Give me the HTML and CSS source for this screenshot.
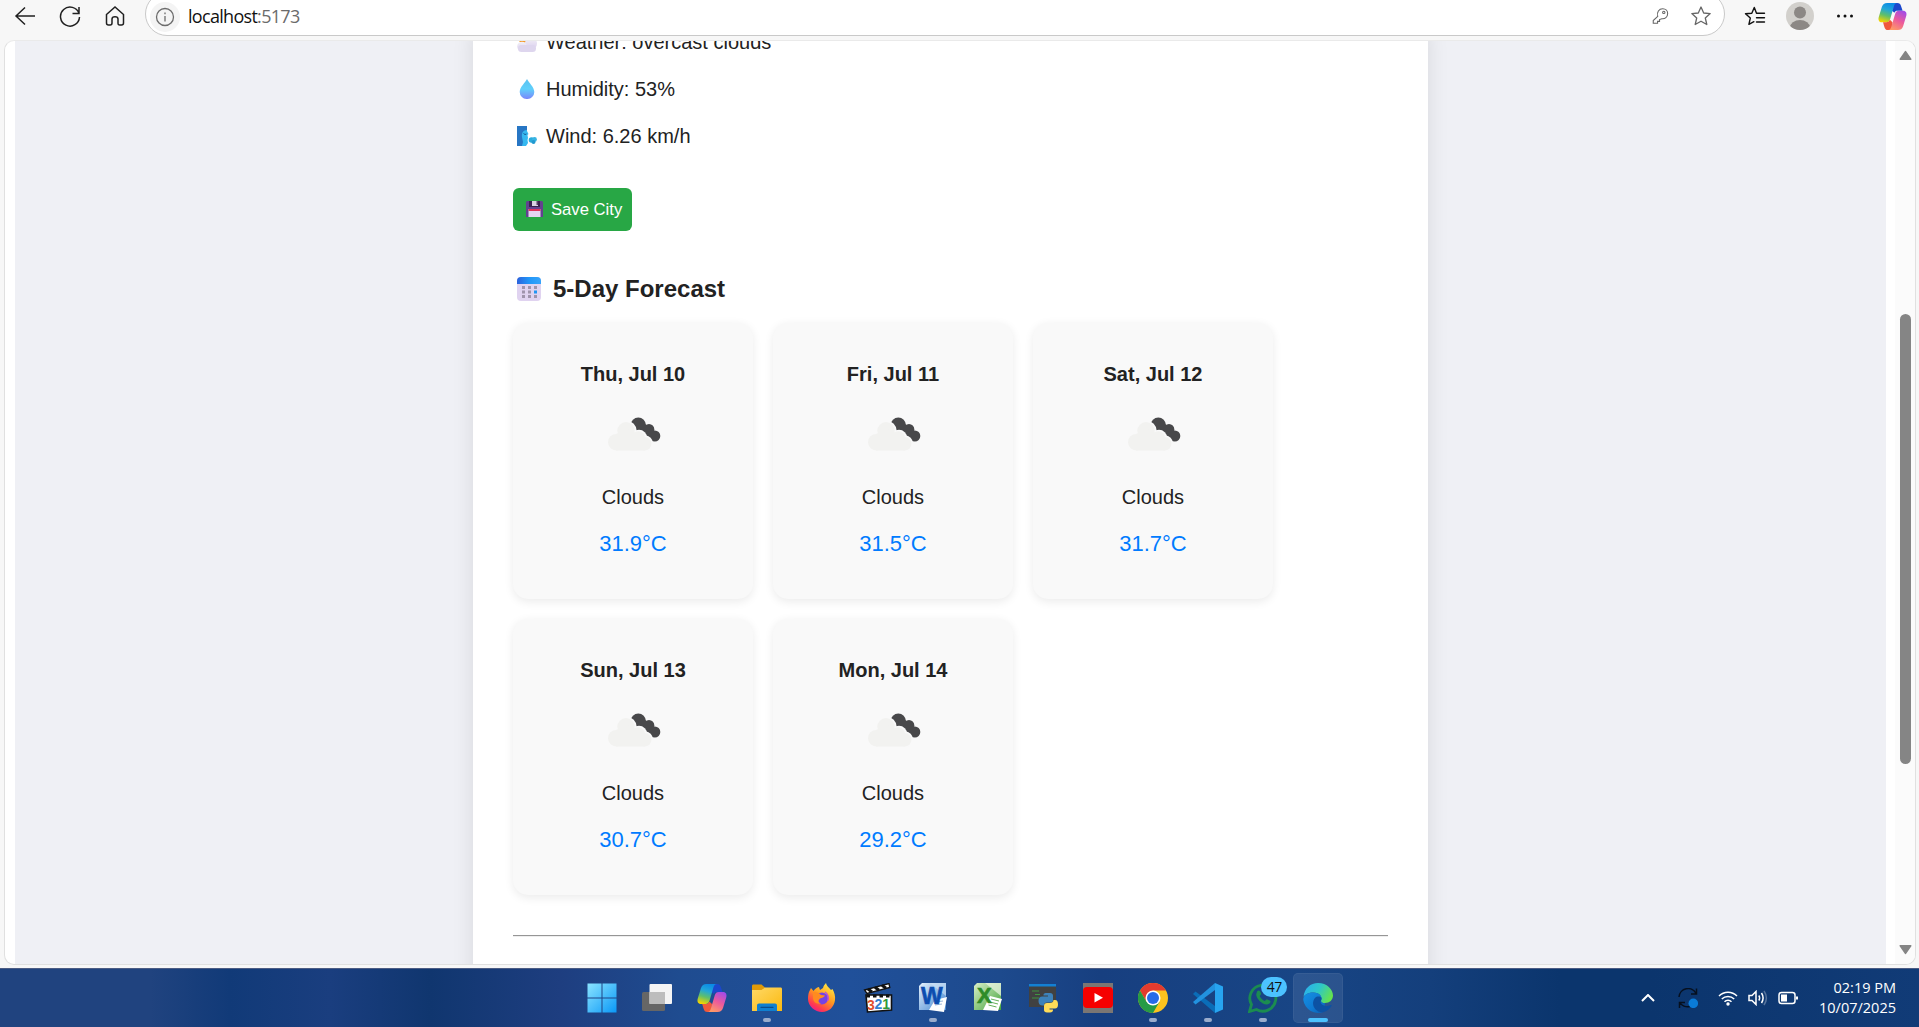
FILE: index.html
```html
<!DOCTYPE html>
<html lang="en">
<head>
<meta charset="utf-8">
<title>Weather forecast</title>
<link rel="stylesheet" href="styles.css">
</head>
<body>
<svg width="0" height="0" class="defs" aria-hidden="true">
  <defs>
    <linearGradient id="cpA" x1="0.6" y1="0" x2="0.3" y2="1"><stop offset="0" stop-color="#0a8ae6"/><stop offset=".35" stop-color="#22a7d8"/><stop offset=".65" stop-color="#5fbf6b"/><stop offset="1" stop-color="#f4d400"/></linearGradient>
    <linearGradient id="cpB" x1="0.8" y1="0" x2="0.3" y2="1"><stop offset="0" stop-color="#a14be8"/><stop offset=".5" stop-color="#ec5a9c"/><stop offset="1" stop-color="#ff9a66"/></linearGradient>
    <linearGradient id="win" x1="0" y1="0" x2="1" y2="1"><stop offset="0" stop-color="#8be4ff"/><stop offset="1" stop-color="#0a98f7"/></linearGradient>
    <linearGradient id="fold" x1="0" y1="0" x2="1" y2="1"><stop offset="0" stop-color="#ffd967"/><stop offset="1" stop-color="#fbb90f"/></linearGradient>
    <linearGradient id="ff" x1="0.8" y1="0" x2="0.2" y2="1"><stop offset="0" stop-color="#fff04a"/><stop offset=".45" stop-color="#ff9a1f"/><stop offset=".8" stop-color="#ff3a4f"/><stop offset="1" stop-color="#e8149c"/></linearGradient>
    <linearGradient id="edgeTop" x1="0" y1="0.2" x2="1" y2="0.6"><stop offset="0" stop-color="#2aaef0"/><stop offset=".5" stop-color="#2fc7c6"/><stop offset="1" stop-color="#66e34a"/></linearGradient>
    <linearGradient id="edgeBot" x1="0" y1="0" x2="1" y2="1"><stop offset="0" stop-color="#1590e4"/><stop offset=".6" stop-color="#0f78d0"/><stop offset="1" stop-color="#0b5cb0"/></linearGradient>
    <linearGradient id="drop" x1="0" y1="0" x2="0" y2="1"><stop offset="0" stop-color="#5cc2f0"/><stop offset=".5" stop-color="#5fd0fb"/><stop offset="1" stop-color="#7a86fb"/></linearGradient>
    <linearGradient id="calTop" x1="0" y1="0" x2="1" y2="0"><stop offset="0" stop-color="#2b62dc"/><stop offset=".5" stop-color="#2196f8"/><stop offset="1" stop-color="#37a4fb"/></linearGradient>
    <linearGradient id="puff" x1="0" y1="0" x2="0" y2="1"><stop offset="0" stop-color="#f3f1f6"/><stop offset="1" stop-color="#d9cdee"/></linearGradient>
    <linearGradient id="excel" x1="0" y1="0" x2="1" y2="1"><stop offset="0" stop-color="#d9f0c8"/><stop offset="1" stop-color="#45a33c"/></linearGradient>
    <linearGradient id="word" x1="0" y1="0" x2="1" y2="1"><stop offset="0" stop-color="#e6f2fd"/><stop offset="1" stop-color="#3f83cf"/></linearGradient>
    <symbol id="copilot" viewBox="0 0 30 28">
      <path d="M15 0h5c2.300 0 3.200 1 4 3.500L25.500 8H20c-1.500 0-2.300.5-3 2L14.500 8z" fill="#1b47cc"/>
      <path d="M9.500 0H20c-2.200 0-3 1.600-3.600 3.600L12.600 16.500C11.800 19 10.800 20 8.500 20H4C1 20 0 17.500.7 14.700L4 4C5 1.300 6.500 0 9.500 0z" fill="url(#cpA)"/>
      <path d="M14.500 28H10.500c-2.500 0-3.200-1-4-3.500L5.200 20h3.300c1.900 0 3-.8 3.800-2.600L15 20z" fill="#f0583c"/>
      <path d="M20.500 28H10.500c2 0 2.800-1.600 3.400-3.600L17.700 11.500C18.500 9 19.500 8 21.800 8H26c3 0 4 2.500 3.300 5.300L26 24c-1 2.700-2.500 4-5.500 4z" fill="url(#cpB)"/>
    </symbol>
    <symbol id="clouds" viewBox="0 0 62 62">
      <g fill="#48484a"><circle cx="36.300" cy="23" r="7.600"/><circle cx="47" cy="27.300" r="5.300"/><circle cx="52.800" cy="34" r="5.500"/><path d="M38 20l9 4 8 7-6 8-14-10z"/></g>
      <g fill="#f9f9f9"><circle cx="24.500" cy="29" r="10.200"/><circle cx="37" cy="36" r="8.200"/><circle cx="43" cy="41.500" r="8"/></g>
      <g fill="#f2f2f0"><circle cx="14.300" cy="40.200" r="8.300"/><circle cx="24" cy="28.800" r="8.700"/><circle cx="36.300" cy="36" r="6.800"/><circle cx="42.800" cy="41.800" r="6.700"/><path d="M14 32l10-5 13 5 6 16.500H14z"/></g>
    </symbol>
  </defs>
</svg>

<div class="screen">
  <header class="toolbar">
    <svg class="nav" viewBox="0 0 24 24"><path d="M22 12H3M12 3.500L3 12l9 8.500"/></svg>
    <svg class="nav" viewBox="0 0 24 24"><path d="M21 9.500A9.500 9.500 0 1 0 21.500 13M21 3v6.500h-6.500"/></svg>
    <svg class="nav" viewBox="0 0 24 24"><path d="M3.500 10.500L12 3l8.500 7.500V19c0 1.400-.7 2-2 2h-1.700c-1.300 0-1.800-.6-1.800-2v-4c0-1.300-1-2.200-3-2.200S9 13.700 9 15v4c0 1.400-.5 2-1.800 2H5.500c-1.300 0-2-.6-2-2z"/></svg>
    <div class="address">
      <span class="info"><svg viewBox="0 0 20 20"><circle cx="10" cy="10" r="8.500"/><path d="M10 9v5.500M10 5.500v1.800"/></svg></span>
      <span class="url">localhost<span class="port">:5173</span></span>
      <svg class="key" viewBox="0 0 20 20"><path d="M7.500 10.500C6 5.500 9 2 13 2c3.500 0 5.500 2.500 5.500 5.200 0 4-3 6.300-6.500 5.800L9.500 14v2H7.300v2H2.500v-3z"/><circle cx="14.200" cy="6" r="1.300"/></svg>
      <svg class="star" viewBox="0 0 22 22"><path d="M11 2l2.700 6 6.500.6-4.900 4.400 1.500 6.500L11 16.200 5.200 19.500 6.700 13 1.800 8.600 8.300 8z"/></svg>
    </div>
    <svg class="fav" viewBox="0 0 22 22"><path d="M12.500 8.200L10.300 2.500 7.800 8.200l-6.300.6 4.800 4.300-1.400 6.200 5-2.600M12.500 8.200h8M12.500 12.800h8M12.500 17h8"/></svg>
    <svg class="avatar" viewBox="0 0 28 28"><clipPath id="av"><circle cx="14" cy="14" r="14"/></clipPath><g clip-path="url(#av)"><path fill="#d2d0cc" d="M0 0h28v28H0z"/><circle cx="14" cy="10.500" r="6" fill="#8c8885"/><ellipse cx="14" cy="25.500" rx="10" ry="7.500" fill="#8c8885"/></g></svg>
    <svg class="dots" viewBox="0 0 18 6"><circle cx="2.500" cy="3" r="1.500"/><circle cx="9" cy="3" r="1.500"/><circle cx="15.500" cy="3" r="1.500"/></svg>
    <svg class="pilot"><use href="#copilot"/></svg>
  </header>

  <main class="viewport">
    <div class="page">
      <section class="container">
        <p class="stat"><svg viewBox="0 0 20 20"><circle cx="6" cy="6" r="5" fill="#f39a2b"/><circle cx="14" cy="11.500" r="6" fill="url(#puff)"/><circle cx="5" cy="14.500" r="4.800" fill="url(#puff)"/><rect x="1" y="13" width="18" height="7" rx="3.500" fill="#ded6ee"/></svg><span>Weather: overcast clouds</span></p>
        <p class="stat"><svg viewBox="0 0 20 20"><path d="M10 0c1.500 3.500 7.300 8 7.300 13A7 7 0 0 1 10 20a7 7 0 0 1-7.300-7C2.700 8 8.500 3.500 10 0z" fill="url(#drop)"/></svg><span>Humidity: 53%</span></p>
        <p class="stat"><svg viewBox="0 0 20 20"><path d="M0 0h10v5l1.500 3-1 1 .5 3-.5 2 .5 3-2 3H0z" fill="#35b8f0"/><path d="M0 0h10v4C6 4 4.500 7 5 11l1 5-1 4H0z" fill="#2776c4"/><path d="M6.500 7.500q1.500 1.800 3 .5" stroke="#155a96" fill="none"/><circle cx="14.500" cy="14" r="2.800" fill="#2babdd"/><circle cx="17.500" cy="13.500" r="2.400" fill="#38b4e3"/><circle cx="16.500" cy="16" r="2" fill="#2299d0"/></svg><span>Wind: 6.26 km/h</span></p>
        <button class="save"><svg viewBox="0 0 17 17"><path d="M1 0h15l1 1v15H0V1z" fill="#63418f"/><path d="M3 0h11v6H3z" fill="#38224f"/><path d="M6 0h6v5H6z" fill="#d9d2e2"/><path d="M10.500 0h1.500v4h-1.500z" fill="#594269"/><path d="M2.500 8h12v8h-12z" fill="#e5d6f2"/><path d="M2.500 8h12v2h-12z" fill="#e0355c"/></svg><span>Save City</span></button>
        <h3 class="heading"><svg viewBox="0 0 24 24"><rect width="24" height="24" rx="4" fill="#e0d3f0"/><path d="M0 7V4a4 4 0 0 1 4-4h16a4 4 0 0 1 4 4v3z" fill="url(#calTop)"/><g fill="#a094ac"><path d="M5 9h3v3H5zM11 9h3v3h-3zM17 9h3v3h-3zM5 13.500h3v3H5zM11 13.500h3v3h-3zM5 18h3v3H5zM11 18h3v3h-3zM17 18h3v3h-3z"/></g><path d="M17 13.500h3v3h-3z" fill="#2196f3"/></svg><span>5-Day Forecast</span></h3>
        <div class="forecast">
          <article class="card"><h4>Thu, Jul 10</h4><svg><use href="#clouds"/></svg><p class="sky">Clouds</p><p class="temp">31.9°C</p></article>
          <article class="card"><h4>Fri, Jul 11</h4><svg><use href="#clouds"/></svg><p class="sky">Clouds</p><p class="temp">31.5°C</p></article>
          <article class="card"><h4>Sat, Jul 12</h4><svg><use href="#clouds"/></svg><p class="sky">Clouds</p><p class="temp">31.7°C</p></article>
          <article class="card"><h4>Sun, Jul 13</h4><svg><use href="#clouds"/></svg><p class="sky">Clouds</p><p class="temp">30.7°C</p></article>
          <article class="card"><h4>Mon, Jul 14</h4><svg><use href="#clouds"/></svg><p class="sky">Clouds</p><p class="temp">29.2°C</p></article>
        </div>
        <hr>
      </section>
    </div>
    <div class="scrollbar">
      <svg viewBox="0 0 12 10"><path d="M6 1.500L10.800 8.500H1.200z"/></svg>
      <div class="thumb"></div>
      <svg viewBox="0 0 12 10"><path d="M6 8.500L1.200 1.500h9.600z"/></svg>
    </div>
  </main>

  <footer class="taskbar">
    <nav class="apps">
      <div class="app"><svg viewBox="0 0 30 30"><path d="M.5.500h14v14H.5zM15.500.500h14v14h-14zM.5 15.500h14v14H.5zM15.500 15.500h14v14h-14z" fill="url(#win)"/></svg></div>
      <div class="app"><svg viewBox="0 0 30 30"><rect y="9" width="23" height="19" rx="1.500" fill="#666"/><rect x="7.500" y="1" width="22.500" height="20" rx="1" fill="#f4f4f4"/><path d="M7.500 9H23v12H7.500z" fill="#bdbdbd"/></svg></div>
      <div class="app"><svg><use href="#copilot"/></svg></div>
      <div class="app run"><svg viewBox="0 0 30 30"><path d="M0 3c0-1 .6-1.500 1.500-1.500h8L13 4.500V8H0z" fill="#e09a08"/><path d="M0 7h9.500L13 4.500h15.500c1 0 1.500.6 1.500 1.500v22H0z" fill="url(#fold)"/><path d="M5 28v-5.500c0-1.300.8-2 2-2h16c1.200 0 2 .7 2 2V28z" fill="#0f7fd0"/><path d="M9 24.300h12" stroke="#0a4c8c" stroke-width="1.300" stroke-linecap="round"/></svg></div>
      <div class="app"><svg viewBox="0 0 30 30"><path d="M2 9l2-4 2.500 3C8 6 9.500 4.500 12 4l1 3 3-2c.5-2 1.500-3.500 3-5 .5 3 3 4.500 5 7l1.500-1c2 4 3 7 2.500 11-.8 7-6 12-13 12S1 23 1 16c0-3 .3-5 1-7z" fill="url(#ff)"/><circle cx="15" cy="15.500" r="6" fill="#7542e5"/><path d="M6 9c3-.5 6 .5 8 3l4 .5c-1 2-3 2-5 3-2 2-2 4 1 5-5 1-8-2-8-6z" fill="#ff8b20"/><path d="M18 9c3 2 4 6 2.500 9" stroke="#b64be2" stroke-width="1.500" fill="none"/></svg></div>
      <div class="app"><svg viewBox="0 0 30 30"><path d="M1.500 7L26 .5l.8 4L4 10.500z" fill="#fff" stroke="#111" stroke-width="1.300"/><path d="M5 6l4 3M12 4.300l4 3M19 2.300l4 3" stroke="#111" stroke-width="3"/><path d="M3 12h25.500v15L4.500 29z" fill="#fff" stroke="#111" stroke-width="1.600"/><path d="M3.500 13h25" stroke="#111" stroke-width="3" stroke-dasharray="3.500 3"/><g font-family="Liberation Sans" font-weight="bold" font-size="14"><text x="4" y="26.500" fill="#e2502d">3</text><text x="11.500" y="26.200" fill="#357fd0">2</text><text x="19.300" y="25.800" fill="#2f9a3b">1</text></g></svg></div>
      <div class="app run"><svg viewBox="0 0 30 30"><path d="M4 0h24v27H1V3z" fill="url(#word)"/><path d="M28 0v13L12 0z" fill="#cfe2f6" opacity=".6"/><path d="M17 17l12-3-3 15-15-2z" fill="#fff"/><path d="M18 19l7-1M17 22l7-1" stroke="#9ab5d8"/><text x="3" y="20.500" textLength="19" font-family="Liberation Sans" font-weight="bold" font-size="23" fill="#0d4db0" stroke="#0d4db0" stroke-width=".6">W</text></svg></div>
      <div class="app"><svg viewBox="0 0 30 30"><path d="M4 0h24v27H1V3z" fill="url(#excel)"/><path d="M28 0v13L12 0z" fill="#eef7e6" opacity=".7"/><path d="M17 13l12 3-4 12-15-1 3-6z" fill="#fff"/><path d="M18 16l8 2M17 19l8 2M15.500 22l8 2" stroke="#67b05a"/><text x="4" y="20" textLength="15" font-family="Liberation Sans" font-weight="bold" font-size="22" fill="#2f8c28" stroke="#2f8c28" stroke-width=".6">X</text></svg></div>
      <div class="app"><svg viewBox="0 0 30 30"><path d="M1 1h27v23H1z" fill="#414141"/><path d="M1 1h27v2.500H1z" fill="#1380d4"/><path d="M4 8h7M7 11.500h5M4 15h7" stroke="#3f9440" stroke-width="1.200"/><path d="M19 10h3c2 0 3 1 3 3v4c0 2-1 2.500-3 2.500h-3c-2 0-3 1-3 3h-1.500c-3 0-4-2-4-4.500s1-4.500 4-4.500H20v-1h-4.500V12c0-1.500 1-2 3.500-2z" fill="#3d82ba" /><path d="M22 29.500h-3c-2 0-3-1-3-2.500v-4c0-2 1-3 3-3h3c2 0 3.500-1 3.500-3H27c2.300 0 3 2 3 4.500s-1 4-3 4h-5.500v1H25V27c0 1.500-1 2.500-3 2.500z" fill="#ffdc58"/></svg></div>
      <div class="app"><svg viewBox="0 0 30 30"><path d="M0 0h30v30H0z" fill="#7b7673"/><rect y="4" width="30" height="21" rx="4" fill="#f60000"/><path d="M11.500 10l8.500 4.800-8.500 4.800z" fill="#fff"/></svg></div>
      <div class="app run"><svg viewBox="0 0 30 30"><circle cx="15" cy="15" r="15" fill="#fcc31e"/><path d="M2 7.500A15 15 0 0 1 28 7.500H15L8.500 18.800z" fill="#e33b2e"/><path d="M2 7.500A15 15 0 0 0 15 30l6.500-11.200h-13z" fill="#259b46"/><circle cx="15" cy="15" r="7.500" fill="#fff"/><circle cx="15" cy="15" r="6" fill="#286be8"/></svg></div>
      <div class="app run"><svg viewBox="0 0 30 30"><path d="M0 11l2.500-2.500L22 23v7z" fill="#0a6db8"/><path d="M0 19l2.500 2.500L22 7V0z" fill="#2292df"/><path d="M22 0l8 3.500v23L22 30z" fill="#27a4f0"/></svg></div>
      <div class="app run"><svg viewBox="0 0 30 30"><path d="M1.500 28.500l2-7a13 13 0 1 1 5 5z" fill="none" stroke="#1b8c50" stroke-width="2.800"/><path d="M9 8.500c1.500-2 3-1 3.500.5l.7 2-1.500 2c1 2.500 3 4 5 5l2-1.800 3.500 1.500c1 .8 0 3.300-3 3.800-5 .5-11-6-11-10z" fill="#1b8c50"/></svg><span class="badge">47</span></div>
      <div class="app run active"><svg viewBox="0 0 30 30"><path d="M.5 14C1.500 5 7.500 0 15 0c9 0 15 6.500 15 12.500 0 4.500-3.500 7.500-8 7.500-4 0-5.500-1.200-4-3.200 1.500-3-1.500-7.300-7.500-7.300C5.500 9.500 2 11.500.5 14z" fill="url(#edgeTop)"/><path d="M.3 17C0 12 5 9.500 10 9.500c6 0 9.300 3.500 8.500 7-1 2 .3 3.600 3.500 3.600l-1 8.700A15 15 0 0 1 .3 17z" fill="url(#edgeBot)"/><path d="M12 15c-5 6 .5 15 8 14.200 4-1 7-3.700 8.700-6.500.3-.7-.3-1-1-.6C23.500 24.500 17 22 17.700 18.500c.3-2 1-2 .8-3C18 13 14 13 12 15z" fill="#0d52a3"/></svg></div>
    </nav>
    <div class="tray">
      <svg class="chev" viewBox="0 0 14 8"><path d="M1 7l6-6 6 6"/></svg>
      <svg class="sync" viewBox="0 0 20 20"><path d="M1 9A9 9 0 0 1 18 5.500M18.500.5v5.500H13M12 18.500A9 9 0 0 1 1.500 14M1.500 20v-5.500H7"/><circle cx="15.300" cy="15.300" r="4.800"/></svg>
      <svg class="wifi" viewBox="0 0 20 16"><path d="M1 6a12.700 12.700 0 0 1 18 0M3.800 9a8.700 8.700 0 0 1 12.400 0M6.500 11.800a5 5 0 0 1 7 0"/><circle cx="10" cy="14" r="1.700"/></svg>
      <svg class="sound" viewBox="0 0 20 16"><path d="M1 5.500h3L8 1.500v13l-4-4H1zM10.800 5.500q1.600 2.500 0 5M13.500 3q3.200 5 0 10"/><path d="M16 1q4.800 7 0 14" opacity=".3"/></svg>
      <svg class="battery" viewBox="0 0 20 14"><rect x="1" y="1.500" width="16" height="11" rx="2.500"/><path class="fill" d="M3 3.500h6v7H3zM18 5.500h2v3h-2z"/></svg>
      <div class="clock"><span>02:19 PM</span><span>10/07/2025</span></div>
    </div>
  </footer>
</div>
</body>
</html>
```
FILE: styles.css
```css
* { box-sizing: border-box; }
body { margin: 0; overflow: hidden; background: #f7f7f7; font-family: "Liberation Sans", Arial, sans-serif; font-size: 20px; color: #222; }
.defs { height: 0; }
.screen { display: flex; flex-direction: column; width: 1919px; height: 1027px; }
svg { display: block; flex: none; }

/* Browser toolbar */
.toolbar { display: flex; align-items: center; flex: none; height: 40px; padding: 0 9px 8px 13px; }
.nav { width: 24px; height: 24px; margin-right: 21px; fill: none; stroke: #202020; stroke-width: 1.500; }
.address { display: flex; align-items: center; width: 1580px; height: 44px; margin: -8px 0 0 -3px; padding: 8px 12px 0 10px; background: #fff; border: 1px solid #c9c9c9; border-radius: 22px; align-self: flex-start; }
.info { display: grid; place-items: center; width: 30px; height: 30px; margin: -3px 0 0 -6px; background: #f4f4f4; border-radius: 50%; }
.info svg { width: 20px; height: 20px; fill: none; stroke: #6c6c6c; stroke-width: 1.300; }
.url { flex: 1; margin: -5px 0 0 8px; font: 18px "Open Sans", sans-serif; letter-spacing: -0.7px; color: #111; }
.port { color: #6b6b6b; }
.key { width: 18px; height: 18px; margin: -4px 21px 0 0; fill: none; stroke: #666; stroke-width: 1.200; }
.star { width: 22px; height: 22px; margin-top: -4px; fill: none; stroke: #666; stroke-width: 1.300; stroke-linejoin: round; }
.fav { width: 22px; height: 22px; margin-left: 19px; fill: none; stroke: #111; stroke-width: 1.400; stroke-linejoin: round; stroke-linecap: round; }
.avatar { width: 28px; height: 28px; margin-left: 20px; }
.dots { width: 18px; height: 6px; margin-left: 22px; fill: #111; }
.pilot { width: 29px; height: 27px; margin-left: 24px; }

/* Page viewport */
.viewport { display: flex; flex: none; width: 1912px; height: 925px; margin: 0 0 3px 4px; padding-left: 10px; background: #fff; border: 1px solid #e0e0e0; border-top-color: #eaeaea; border-radius: 10px; overflow: hidden; }
.page { width: 1871px; height: 923px; padding-left: 458px; background: #eff0f5; overflow: hidden; }
.container { width: 955px; height: 1100px; padding: 0 40px; margin-top: -19px; background: #fff; box-shadow: 0 0 20px rgba(0, 0, 0, .1); }
.stat { display: flex; align-items: center; gap: 9px; height: 23px; margin: 9px 0 24px 4px; }
.stat + .stat { margin-top: 24px; }
.stat svg { width: 20px; height: 20px; margin-top: -1px; }
.stat span { line-height: 23px; }
.save { display: flex; align-items: center; width: 119px; height: 43px; margin-top: 40px; padding: 0 0 0 13px; gap: 8px; background: #28a745; border: 0; border-radius: 6px; color: #fff; font: 16.670px "Liberation Sans", Arial, sans-serif; }
.save svg { width: 17px; height: 17px; }
.save span { padding-top: 1px; }
.heading { display: flex; align-items: center; gap: 12px; height: 28px; margin: 44px 0 19.500px 4px; font-size: 24px; line-height: 28px; }
.heading svg { width: 24px; height: 24px; margin-top: -1px; }
.forecast { display: grid; grid-template-columns: repeat(3, 240px); gap: 20px; }
.card { display: flex; flex-direction: column; align-items: center; height: 276.400px; padding-top: 40.600px; background: #f9f9f9; border-radius: 15px; box-shadow: 0 2.500px 10px rgba(0, 0, 0, .08); }
.card h4 { margin: 0; font-size: 20px; line-height: 23px; }
.card svg { width: 62px; height: 62px; margin: 16px 0 0; }
.card p { margin: 0; }
.sky { padding-top: 22px; line-height: 23px; }
.card .temp { margin-top: 22px; font-size: 22px; line-height: 25px; color: #007bff; }
hr { height: 2px; margin: 40px 0 0; border: 0; border-top: 1px solid #969696; border-bottom: 1px solid #eee; }
.scrollbar { display: flex; flex-direction: column; align-items: center; width: 20px; margin-left: 9px; padding: 9px 0 9px; background: #fbfbfb; }
.scrollbar svg { width: 13px; height: 11px; fill: #858585; stroke: #858585; stroke-width: 1.500; stroke-linejoin: round; }
.thumb { width: 11px; height: 450px; margin: 253px 0 auto; background: #858585; border-radius: 6px; }

/* Taskbar */
.taskbar { display: flex; flex: 1; padding: 4px 23px 0 574.500px; border-top: 1px solid #4b5c84; background: linear-gradient(90deg, #20437f 0, #20437f 150px, #113a78 230px, #1a3e7f 330px, #10366f 430px, #1e3e80 560px, #1f4c90 680px, #20509a 850px, #1d4a8d 1000px, #173f80 1100px, #184585 1300px, #143f7c 1430px, #0b356d 1560px, #0b356d 1650px, #113b77 1919px); }
.apps { display: flex; }
.app { display: flex; flex-direction: column; align-items: center; position: relative; width: 50px; height: 50px; margin: 0 2.550px; padding-top: 10px; border-radius: 5px; }
.app svg { width: 30px; height: 30px; }
.run::after { content: ""; width: 8px; height: 4px; margin-top: 5px; background: #9aaccc; border-radius: 2px; }
.active { background: rgba(255, 255, 255, .09); box-shadow: inset 0 0 0 1px rgba(255, 255, 255, .05); }
.active::after { width: 20px; background: #4cc2ff; }
.badge { position: absolute; left: 23px; top: 4px; width: 26px; height: 20px; border-radius: 10px; background: #4cc2ff; color: #111; font: 14px/20px "Open Sans", sans-serif; text-align: center; letter-spacing: -.5px; }
.tray { display: flex; align-items: center; margin-left: auto; height: 50px; }
.tray svg { fill: none; stroke: #fff; stroke-width: 1.500; }
.chev { width: 14px; height: 8px; margin-right: 23px; }
.tray .chev { stroke-width: 2; }
.sync { width: 20px; height: 20px; margin-right: 20px; }
.tray .sync path { stroke: #06101f; }
.tray .sync circle { fill: #0a7bd8; stroke: none; }
.wifi { width: 20px; height: 16px; margin-right: 10px; }
.wifi circle, .battery .fill { fill: #fff; stroke: none; }
.sound { width: 20px; height: 16px; margin-right: 10px; }
.battery { width: 20px; height: 14px; }
.clock { display: flex; flex-direction: column; align-items: flex-end; width: 98px; margin-top: -1px; color: #fff; font: 14.500px/20px "Open Sans", sans-serif; }
```
